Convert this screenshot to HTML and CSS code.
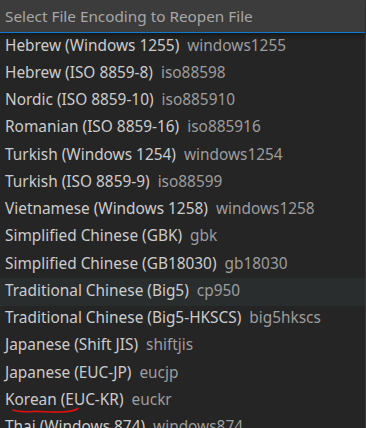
FILE: index.html
```html
<!DOCTYPE html>
<html lang="en">
<head>
    <meta charset="UTF-8">
    <meta name="viewport" content="width=device-width, initial-scale=1.0">
    <title>Reopen with Encoding</title>
    <link rel="stylesheet" href="styles.css">
</head>
<body>
    <div class="picker">
        <div class="picker-input">
            <input type="text" placeholder="Select File Encoding to Reopen File">
        </div>
        <div class="picker-list">
            <div class="row"><span class="label">Hebrew (Windows 1255)</span><span class="desc">windows1255</span></div>
            <div class="row"><span class="label">Hebrew (ISO 8859-8)</span><span class="desc">iso88598</span></div>
            <div class="row"><span class="label">Nordic (ISO 8859-10)</span><span class="desc">iso885910</span></div>
            <div class="row"><span class="label">Romanian (ISO 8859-16)</span><span class="desc">iso885916</span></div>
            <div class="row"><span class="label">Turkish (Windows 1254)</span><span class="desc">windows1254</span></div>
            <div class="row"><span class="label">Turkish (ISO 8859-9)</span><span class="desc">iso88599</span></div>
            <div class="row"><span class="label">Vietnamese (Windows 1258)</span><span class="desc">windows1258</span></div>
            <div class="row"><span class="label">Simplified Chinese (GBK)</span><span class="desc">gbk</span></div>
            <div class="row"><span class="label">Simplified Chinese (GB18030)</span><span class="desc">gb18030</span></div>
            <div class="row hover"><span class="label">Traditional Chinese (Big5)</span><span class="desc">cp950</span></div>
            <div class="row"><span class="label">Traditional Chinese (Big5-HKSCS)</span><span class="desc">big5hkscs</span></div>
            <div class="row"><span class="label">Japanese (Shift JIS)</span><span class="desc">shiftjis</span></div>
            <div class="row"><span class="label">Japanese (EUC-JP)</span><span class="desc">eucjp</span></div>
            <div class="row marked">
                <span class="label">Korean (EUC-KR)</span><span class="desc">euckr</span>
                <svg class="scribble" width="72" height="8" viewBox="0 0 72 8">
                    <path d="M2 3 C8 5, 14 5, 22 4.5 C30 4, 38 5.5, 48 5 C56 4.8, 62 5, 67 1.5" fill="none" stroke="#e01010" stroke-width="1.6" stroke-linecap="round"/>
                </svg>
            </div>
            <div class="row"><span class="label">Thai (Windows 874)</span><span class="desc">windows874</span></div>
        </div>
    </div>
</body>
</html>
```

FILE: styles.css
```css
* {
    margin: 0;
    padding: 0;
    box-sizing: border-box;
}

body {
    font-family: "Noto Sans", sans-serif;
    background-color: #252526;
    overflow: hidden;
}

.picker {
    width: 366px;
    height: 428px;
    display: flex;
    flex-direction: column;
    border-right: 1px solid #3a3a3a;
}

.picker-input {
    height: 33px;
    background-color: #3c3c3c;
    border-bottom: 1px solid #0e7ad1;
    box-shadow: 0 2px 5px rgba(0, 0, 0, 0.45);
    position: relative;
    z-index: 1;
}

.picker-input input {
    width: 100%;
    height: 32px;
    background: transparent;
    border: none;
    outline: none;
    padding: 0 5px;
    font-family: inherit;
    font-size: 15.3px;
    color: #cccccc;
}

.picker-input input::placeholder {
    color: #a7a7a7;
}

.picker-list {
    flex: 1;
    overflow: hidden;
}

.row {
    height: 27.25px;
    display: flex;
    align-items: center;
    padding: 0 5px 3px;
    font-size: 15.4px;
    white-space: nowrap;
    position: relative;
}

.row.hover {
    background-color: #2a2d2e;
}

.label {
    color: #cccccc;
}

.desc {
    color: #9d9d9d;
    margin-left: 8px;
}

.scribble {
    position: absolute;
    left: 11px;
    top: 20px;
}
```
